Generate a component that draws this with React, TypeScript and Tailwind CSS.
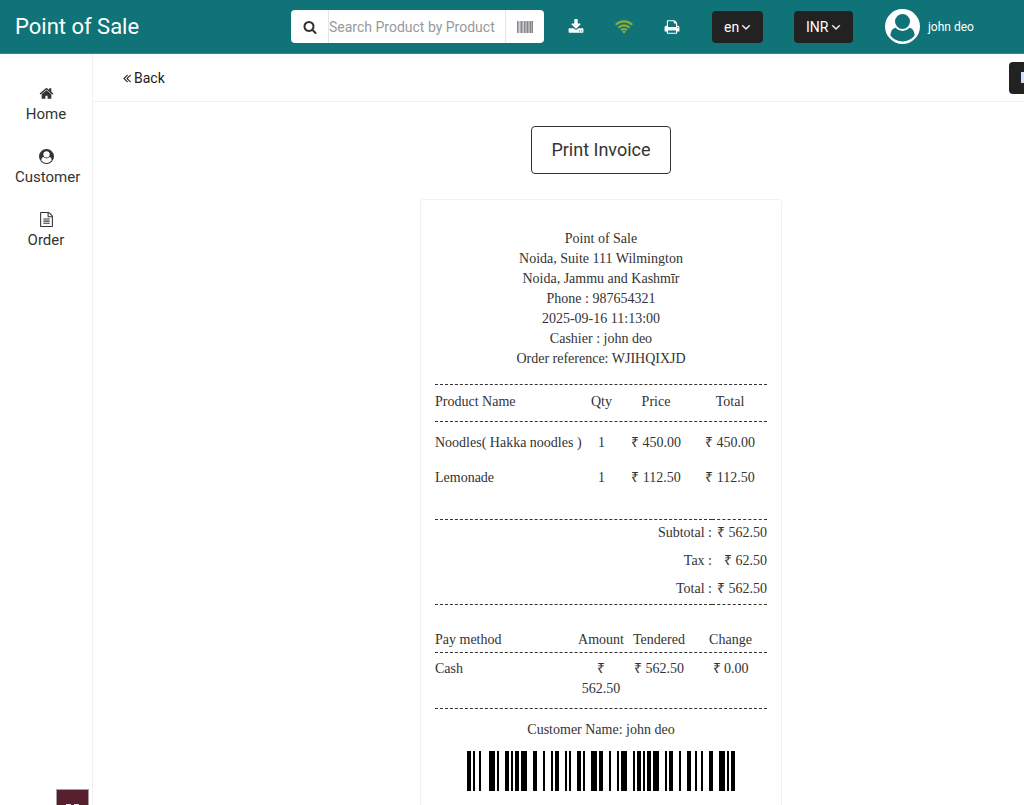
import React, { useState } from 'react';

const ICONS = {
  home: 'M1472 992v480q0 26-19 45t-45 19h-384v-384h-256v384h-384q-26 0-45-19t-19-45v-480q0-1 .5-3t.5-3l575-474 575 474q1 2 1 6zm223-69l-62 74q-8 9-21 11h-3q-13 0-21-7l-692-577-692 577q-12 8-24 7-13-2-21-11l-62-74q-8-10-7-23.5t11-21.5l719-599q32-26 76-26t76 26l244 204v-195q0-14 9-23t23-9h192q14 0 23 9t9 23v408l219 182q10 8 11 21.5t-7 23.5z',
  user: 'M1523 1339q-22-155-87.5-257.5t-184.5-118.5q-67 74-159.5 115.5t-195.5 41.5-195.5-41.5-159.5-115.5q-119 16-184.5 118.5t-87.5 257.5q106 150 271 237.5t356 87.5 356-87.5 271-237.5zm-243-699q0-159-112.5-271.5t-271.5-112.5-271.5 112.5-112.5 271.5 112.5 271.5 271.5 112.5 271.5-112.5 112.5-271.5zM1792 896a896 896 0 1 1-1792 0a896 896 0 1 1 1792 0z',
  file: 'M1596 380q28 28 48 76t20 88v1152q0 40-28 68t-68 28h-1344q-40 0-68-28t-28-68v-1600q0-40 28-68t68-28h896q40 0 88 20t76 48zm-444-244v376h376q-10-29-22-41l-313-313q-12-12-41-22zm384 1528v-1024h-416q-40 0-68-28t-28-68v-416h-768v1536h1280zm-1024-864q0-14 9-23t23-9h704q14 0 23 9t9 23v64q0 14-9 23t-23 9h-704q-14 0-23-9t-9-23v-64zm736 224q14 0 23 9t9 23v64q0 14-9 23t-23 9h-704q-14 0-23-9t-9-23v-64q0-14 9-23t23-9h704zm0 256q14 0 23 9t9 23v64q0 14-9 23t-23 9h-704q-14 0-23-9t-9-23v-64q0-14 9-23t23-9h704z',
  search: 'M1216 832q0-185-131.5-316.5t-316.5-131.5-316.5 131.5-131.5 316.5 131.5 316.5 316.5 131.5 316.5-131.5 131.5-316.5zm512 832q0 52-38 90t-90 38q-54 0-90-38l-343-342q-179 124-399 124-143 0-273.5-55.5t-225-150-150-225-55.5-273.5 55.5-273.5 150-225 225-150 273.5-55.5 273.5 55.5 225 150 150 225 55.5 273.5q0 220-124 399l343 343q37 37 37 90z',
  download: 'M1344 1344q0-26-19-45t-45-19-45 19-19 45 19 45 45 19 45-19 19-45zm256 0q0-26-19-45t-45-19-45 19-19 45 19 45 45 19 45-19 19-45zm128-224v320q0 40-28 68t-68 28h-1472q-40 0-68-28t-28-68v-320q0-40 28-68t68-28h465l135 136q58 56 136 56t136-56l136-136h464q40 0 68 28t28 68zm-325-569q17 41-14 70l-448 448q-18 19-45 19t-45-19l-448-448q-31-29-14-70 17-39 59-39h256v-448q0-26 19-45t45-19h256q26 0 45 19t19 45v448h256q42 0 59 39z',
  print: 'M448 1536h896v-256h-896v256zm0-640h896v-384h-160q-40 0-68-28t-28-68v-160h-640v640zm1152 64q0-26-19-45t-45-19-45 19-19 45 19 45 45 19 45-19 19-45zm128 0v416q0 13-9.5 22.5t-22.5 9.5h-224v160q0 40-28 68t-68 28h-960q-40 0-68-28t-28-68v-160h-224q-13 0-22.5-9.5t-9.5-22.5v-416q0-79 56.5-135.5t135.5-56.5h64v-544q0-40 28-68t68-28h672q40 0 88 20t76 48l152 152q28 28 48 76t20 88v256h64q79 0 135.5 56.5t56.5 135.5z',
  down: 'M1395 736q0 13-10 23l-466 466q-10 10-23 10t-23-10l-466-466q-10-10-10-23t10-23l50-50q10-10 23-10t23 10l393 393 393-393q10-10 23-10t23 10l50 50q10 10 10 23z',
  back: 'M1011 1376q0 13-10 23l-50 50q-10 10-23 10t-23-10l-466-466q-10-10-10-23t10-23l466-466q10-10 23-10t23 10l50 50q10 10 10 23t-10 23l-393 393 393 393q10 10 10 23zm384 0q0 13-10 23l-50 50q-10 10-23 10t-23-10l-466-466q-10-10-10-23t10-23l466-466q10-10 23-10t23 10l50 50q10 10 10 23t-10 23l-393 393 393 393q10 10 10 23z'
};

const Icon = ({ name, className }: { name: keyof typeof ICONS, className: string }) => (
  <svg viewBox="0 0 1792 1792" fill="currentColor" fillRule={name === 'user' ? 'evenodd' : 'nonzero'} className={className} aria-hidden="true">
    <path d={ICONS[name]} />
  </svg>
);

const NAV = [
  { label: 'Home', icon: 'home' },
  { label: 'Customer', icon: 'user' },
  { label: 'Order', icon: 'file' }
] as const;

const STORE_LINES = [
  'Point of Sale',
  'Noida, Suite 111 Wilmington',
  'Noida, Jammu and Kashmīr',
  'Phone : 987654321',
  '2025-09-16 11:13:00',
  'Cashier : john deo',
  'Order reference: WJIHQIXJD'
];

const ITEMS = [
  { name: 'Noodles( Hakka noodles )', qty: 1, price: '₹ 450.00', total: '₹ 450.00' },
  { name: 'Lemonade', qty: 1, price: '₹ 112.50', total: '₹ 112.50' }
];

const TOTALS = [
  ['Subtotal :', '₹ 562.50'],
  ['Tax :', '₹ 62.50'],
  ['Total :', '₹ 562.50']
];

// Code 128 (set B) bar/space widths: start, nine characters, checksum, stop
const BARCODE = [
  '211214', '311321', '112133', '231311', '231113', '211331',
  '231311', '331121', '112133', '112313', '221213', '2331112'
].join('');

const Barcode = () => {
  let x = 0;
  const bars: React.ReactNode[] = [];
  BARCODE.split('').forEach((digit, i) => {
    const width = Number(digit) * 2;
    if (i % 2 === 0) bars.push(<rect key={i} x={x} y={0} width={width} height={40} />);
    x += width;
  });
  return (
    <svg width={x} height={40} className="mx-auto mt-[11px] block" role="img" aria-label="Order barcode" shapeRendering="crispEdges">
      {bars}
    </svg>
  );
};

// One unbroken dashed rule across all columns of a table
const RuleRow = () => (
  <tr>
    <td colSpan={4} className="p-0">
      <hr className="border-t border-dashed border-[#333]" />
    </td>
  </tr>
);

const HeaderSelect = ({ label, options, className }: { label: string, options: string[], className: string }) => {
  const [value, setValue] = useState(options[0]);
  return (
    <div className={`relative h-8 shrink-0 text-white ${className}`}>
      <select
        aria-label={label}
        value={value}
        onChange={(e) => setValue(e.target.value)}
        className="h-full w-full appearance-none rounded bg-[#222] pl-3 text-sm"
      >
        {options.map((o) => <option key={o}>{o}</option>)}
      </select>
      <Icon name="down" className="pointer-events-none absolute top-[9px] right-[10px] size-[14px] stroke-current stroke-[50px]" />
    </div>
  );
};

const Header = () => (
  <header className="flex h-[54px] shrink-0 items-center border-b border-[#348a8d] bg-[#0f7377] text-white">
    <h1 className="w-[291px] shrink-0 pl-[15px] text-[22px]">Point of Sale</h1>

    <form className="flex h-[33px] w-[253px] shrink-0 overflow-hidden rounded bg-white text-[#333]">
      <button type="button" aria-label="Search" className="flex w-[38px] items-center justify-center border-r border-[#dbe9e9]">
        <Icon name="search" className="size-[14px]" />
      </button>
      <input
        aria-label="Search product"
        placeholder="Search Product by Product"
        className="min-w-0 flex-1 text-sm placeholder:text-[#999]"
      />
      <button type="button" aria-label="Scan barcode" className="flex w-[39px] items-center justify-center border-l border-[#dbe9e9]">
        <svg width="16" height="12" aria-hidden="true">
          <rect width="16" height="12" fill="#b3b1b5" />
          <path d="M.5 0v12M4.500 0v12M7.500 0v12M10.500 0v12M13.500 0v12M15.500 0v12" stroke="#85878d" />
          <path d="M2.500 0v12M6.500 0v12" stroke="#d9cfca" />
        </svg>
      </button>
    </form>

    <button type="button" aria-label="Download" className="ml-6 shrink-0">
      <Icon name="download" className="size-4" />
    </button>
    <span className="ml-[31px] shrink-0 text-[#8aab3c]">
      <svg width="18" height="14" viewBox="0 0 18 14" fill="none" stroke="currentColor" strokeWidth="2.200" aria-label="Online">
        <path d="M.7 4.800a12 12 0 0 1 16.600 0M3.400 7.600a8 8 0 0 1 11.200 0M6.100 10.200a4.200 4.200 0 0 1 5.800 0" />
        <path d="M9 13.500L7.100 11.700a2.700 2.700 0 0 1 3.800 0z" fill="currentColor" stroke="none" />
      </svg>
    </span>
    <button type="button" aria-label="Print" className="ml-[31px] shrink-0">
      <Icon name="print" className="size-4" />
    </button>

    <HeaderSelect label="Language" options={['en', 'fr']} className="ml-8 w-[51px]" />
    <HeaderSelect label="Currency" options={['INR', 'USD']} className="ml-[31px] w-[59px]" />

    <a href="#profile" className="ml-8 flex shrink-0 items-center gap-2 text-xs">
      <Icon name="user" className="size-[35px]" />
      john deo
    </a>
  </header>
);

const Receipt = () => (
  <section className="mx-auto mt-[25px] w-[362px] rounded-[3px] border border-[#f1f1f1] px-[14px] pt-[29px] pb-10 text-center font-['Liberation_Serif',serif] text-sm text-[#333]">
    {STORE_LINES.map((line) => <p key={line}>{line}</p>)}

    <table className="mt-[15px] w-full table-fixed border-collapse">
      <colgroup>
        <col />
        <col className="w-[35px]" />
        <col className="w-[74px]" />
        <col className="w-[74px]" />
      </colgroup>
      <thead>
        <RuleRow />
        <tr>
          <th className="pt-[7px] pb-[9px] text-left font-normal">Product Name</th>
          <th className="pt-[7px] pb-[9px] font-normal">Qty</th>
          <th className="pt-[7px] pb-[9px] font-normal">Price</th>
          <th className="pt-[7px] pb-[9px] font-normal">Total</th>
        </tr>
        <RuleRow />
      </thead>
      <tbody>
        {ITEMS.map((item) => (
          <tr key={item.name}>
            <td className="pt-[11px] pb-1 text-left whitespace-nowrap">{item.name}</td>
            <td className="pt-[11px] pb-1">{item.qty}</td>
            <td className="pt-[11px] pb-1">{item.price}</td>
            <td className="pt-[11px] pb-1">{item.total}</td>
          </tr>
        ))}
      </tbody>
    </table>

    <table className="mt-[27px] w-full border-y border-dashed border-[#333]">
      <tbody>
        {TOTALS.map(([label, amount]) => (
          <tr key={label} className="text-right">
            <th scope="row" className="pt-[3px] pb-[5px] text-right font-normal">{label}</th>
            <td className="w-[55px] pt-[3px] pb-[5px] whitespace-nowrap">{amount}</td>
          </tr>
        ))}
      </tbody>
    </table>

    <table className="mt-[25px] w-full table-fixed border-collapse">
      <colgroup>
        <col />
        <col className="w-[46px]" />
        <col className="w-[70px]" />
        <col className="w-[73px]" />
      </colgroup>
      <thead>
        <tr>
          <th className="pb-[2px] text-left font-normal">Pay method</th>
          <th className="pb-[2px] font-normal">Amount</th>
          <th className="pb-[2px] font-normal">Tendered</th>
          <th className="pb-[2px] font-normal">Change</th>
        </tr>
        <RuleRow />
      </thead>
      <tbody>
        <tr className="align-top">
          <td className="pt-[6px] pb-[9px] text-left">Cash</td>
          <td className="pt-[6px] pb-[9px]">₹ 562.50</td>
          <td className="pt-[6px] pb-[9px]">₹ 562.50</td>
          <td className="pt-[6px] pb-[9px]">₹ 0.00</td>
        </tr>
        <RuleRow />
      </tbody>
    </table>

    <p className="mt-[11px]">Customer Name: john deo</p>
    <Barcode />
  </section>
);

const App: React.FC = () => {
  return (
    <div className="relative flex h-screen flex-col overflow-hidden bg-white font-[Roboto,sans-serif] text-[#333]">
      <Header />

      <div className="flex min-h-0 flex-1">
        <nav className="flex w-[93px] shrink-0 flex-col gap-[23px] border-r border-[#f1f1f1] px-[15px] pt-8 text-[15px]">
          {NAV.map((item) => (
            <a key={item.label} href={`#${item.label.toLowerCase()}`} className="block h-10 text-center">
              <Icon name={item.icon} className="mx-auto size-[15px]" />
              <span className="mt-[3px] block leading-5">{item.label}</span>
            </a>
          ))}
        </nav>

        {/* The register pane is wider than the room beside the side bar, so it runs past the right edge */}
        <main className="w-full shrink-0 pr-2">
          <div className="flex h-12 items-center border-b border-[#f1f1f1] pl-[27px]">
            <a href="#back" className="flex items-center text-sm text-[#222]">
              <Icon name="back" className="size-[14px]" />
              Back
            </a>
            <button type="button" aria-label="Full screen" className="ml-auto flex h-8 w-[100px] items-center rounded bg-[#222] pl-3 text-[#cfe3ff]">
              <svg width="14" height="11" fill="currentColor" aria-hidden="true">
                <path d="M0 0h14v11H0z" />
              </svg>
            </button>
          </div>

          <div className="pt-6 text-center">
            <button type="button" className="h-12 w-[140px] rounded border border-[#333] text-lg">Print Invoice</button>
          </div>
          <Receipt />
        </main>
      </div>

      <button type="button" aria-label="Debug bar" className="absolute bottom-0 left-14 flex h-4 w-[33px] justify-center gap-[3px] overflow-hidden border border-b-0 border-[#a89ea0] bg-[#56202f] pt-[14px]">
        <span className="size-[5px] bg-[#f1d9e3]" />
        <span className="size-[5px] bg-[#f1d9e3]" />
      </button>
    </div>
  );
};

export default App;
